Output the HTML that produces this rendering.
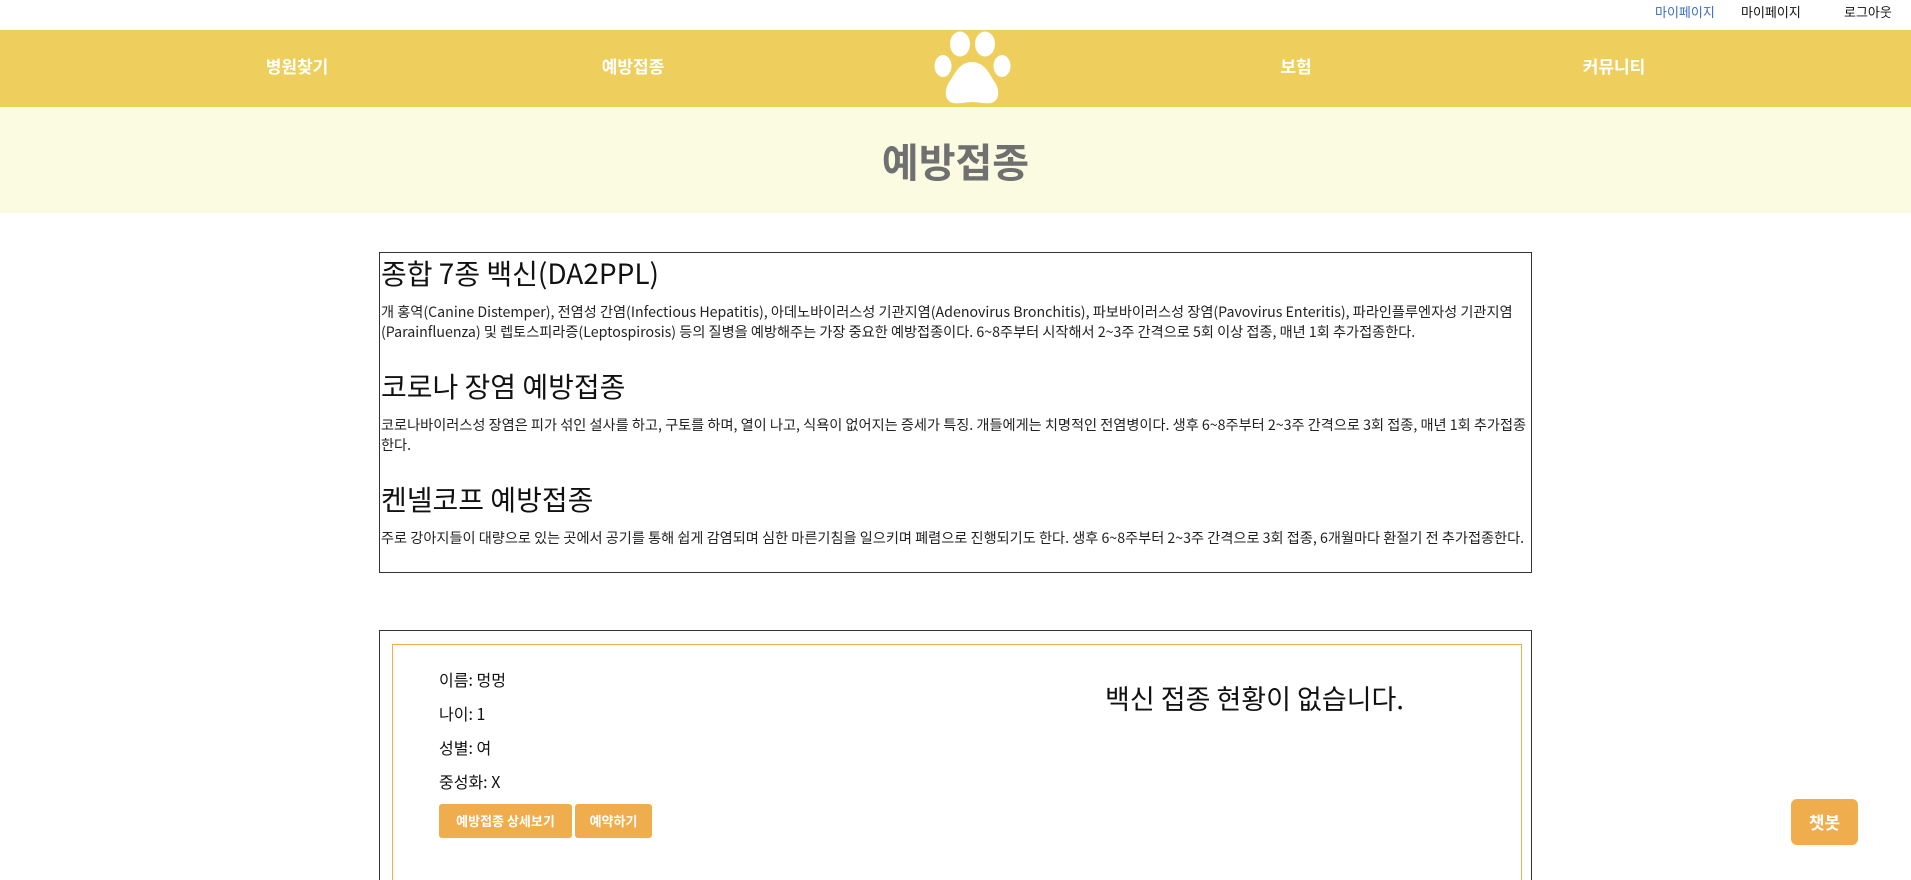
<!DOCTYPE html>
<html style="width:1911px;height:880px;overflow:hidden"><head><meta charset="utf-8">
<style>
*{margin:0;padding:0;box-sizing:border-box}
body{width:1911px;height:880px;overflow:hidden;background:#fff;font-family:"Noto Sans CJK KR","Liberation Sans",sans-serif;color:#111;position:relative}
#wrap{position:relative;width:1911px;height:880px;overflow:hidden}
.top{position:absolute;top:2px;font-size:13px}
.nav{position:absolute;top:30px;left:0;width:1911px;height:77px;background:#eecf5d}
.nav a{position:absolute;top:23px;transform:translateX(-50%);color:#fff;font-weight:bold;font-size:17px;text-decoration:none}
.band{position:absolute;top:107px;left:0;width:1911px;height:106px;background:#fbfbe1;text-align:center}
.band h1{font-size:40px;color:#707070;font-weight:bold;line-height:106px}
.box1{position:absolute;left:379px;top:252px;width:1153px;height:321px;border:1px solid #333;padding:0 1px}
.box1 h2{font-size:28px;font-weight:normal;line-height:40px}
.box1 p{font-size:14.2px;line-height:20px;margin-top:9px;margin-bottom:24px;color:#222}
.box2{position:absolute;left:379px;top:630px;width:1153px;height:250px;border:1px solid #333;border-bottom:none;overflow:hidden}
.inner{position:absolute;left:12px;top:13px;width:1130px;height:237px;border:1px solid #f0ad4e;border-bottom:none}
.info{position:absolute;left:46px;font-size:16px;line-height:24px}
.btn{position:absolute;top:159px;height:34px;background:#f0ad4e;color:#fff;font-weight:bold;font-size:13px;border-radius:3px;text-align:center;line-height:34px}
.chat{position:absolute;left:1791px;top:799px;width:67px;height:46px;background:#f0ad4e;color:#fff;font-weight:bold;font-size:17px;border-radius:6px;text-align:center;line-height:46px}
</style></head><body><div id="wrap">
<div class="top" style="left:1655px;color:#3a6fc4">마이페이지</div>
<div class="top" style="left:1741px">마이페이지</div>
<div class="top" style="left:1844px">로그아웃</div>
<div class="nav">
<a style="left:297px">병원찾기</a>
<a style="left:633px">예방접종</a>
<a style="left:1296px">보험</a>
<a style="left:1614px">커뮤니티</a>
<svg style="position:absolute;left:0;top:-30px" width="1911" height="107">
<g fill="#fff">
<ellipse cx="960" cy="44" rx="10" ry="12.5"/>
<ellipse cx="985" cy="44" rx="10" ry="12.5"/>
<ellipse cx="943" cy="66" rx="8.5" ry="11"/>
<ellipse cx="1002" cy="66" rx="8.5" ry="11"/>
<path d="M972 62 C960 62 955 73 950 81 C944 89 944 101 953 103 C960 104 966 102 972 102 C978 102 984 104 991 103 C1000 101 1000 89 994 81 C989 73 984 62 972 62Z"/>
</g></svg>
</div>
<div class="band"><h1>예방접종</h1></div>
<div class="box1">
<h2>종합 7종 백신(DA2PPL)</h2>
<p>개 홍역(Canine Distemper), 전염성 간염(Infectious Hepatitis), 아데노바이러스성 기관지염(Adenovirus Bronchitis), 파보바이러스성 장염(Pavovirus Enteritis), 파라인플루엔자성 기관지염(Parainfluenza) 및 렙토스피라증(Leptospirosis) 등의 질병을 예방해주는 가장 중요한 예방접종이다. 6~8주부터 시작해서 2~3주 간격으로 5회 이상 접종, 매년 1회 추가접종한다.</p>
<h2>코로나 장염 예방접종</h2>
<p>코로나바이러스성 장염은 피가 섞인 설사를 하고, 구토를 하며, 열이 나고, 식욕이 없어지는 증세가 특징. 개들에게는 치명적인 전염병이다. 생후 6~8주부터 2~3주 간격으로 3회 접종, 매년 1회 추가접종한다.</p>
<h2>켄넬코프 예방접종</h2>
<p>주로 강아지들이 대량으로 있는 곳에서 공기를 통해 쉽게 감염되며 심한 마른기침을 일으키며 폐렴으로 진행되기도 한다. 생후 6~8주부터 2~3주 간격으로 3회 접종, 6개월마다 환절기 전 추가접종한다.</p>
</div>
<div class="box2"><div class="inner">
<div class="info" style="top:22px">이름: 멍멍</div>
<div class="info" style="top:56px">나이: 1</div>
<div class="info" style="top:90px">성별: 여</div>
<div class="info" style="top:124px">중성화: X</div>
<div class="btn" style="left:46px;width:133px">예방접종 상세보기</div>
<div class="btn" style="left:182px;width:77px">예약하기</div>
<div style="position:absolute;left:712px;top:33px;font-size:27px">백신 접종 현황이 없습니다.</div>
</div></div>
<div class="chat">챗봇</div>
</div></body></html>
